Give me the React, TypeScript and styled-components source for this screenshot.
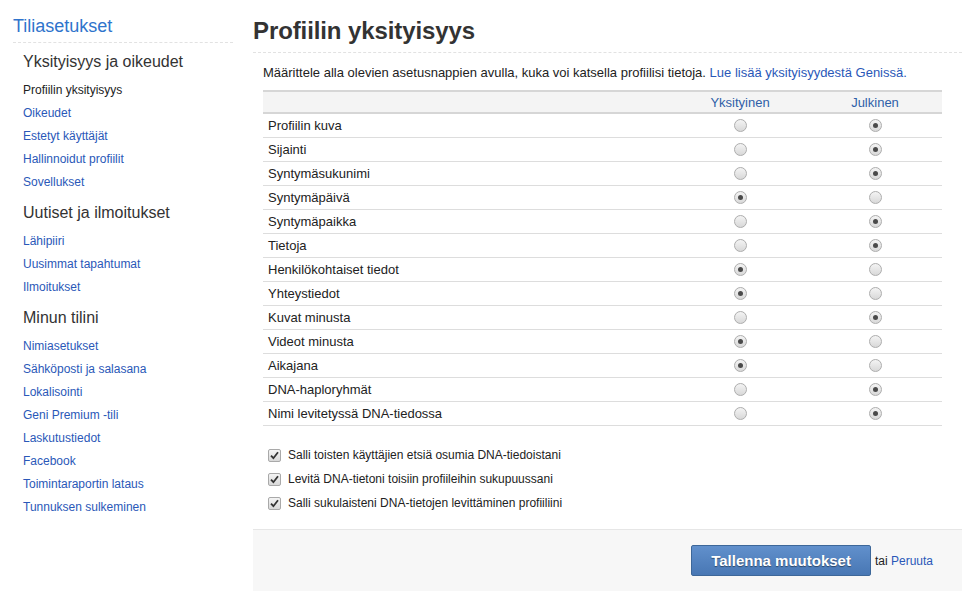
import React from "react";
import styled, { createGlobalStyle } from "styled-components";

const Global = createGlobalStyle`
  html, body { margin: 0; padding: 0; background: #fff; }
  body { font-family: "Liberation Sans", Arial, sans-serif; color: #222; }
  * { box-sizing: border-box; }
`;

const Page = styled.div`
  display: flex;
  width: 975px;
  min-height: 612px;
  align-items: flex-start;
`;

const Sidebar = styled.nav`
  width: 253px;
  flex: none;
  padding: 15px 20px 0 13px;
`;

const SideTitle = styled.div`
  font-size: 18px;
  line-height: 22px;
  color: #2f74cc;
  padding-bottom: 5px;
  border-bottom: 1px dashed #e2e2e2;
`;

const SideGroup = styled.div`
  padding-left: 10px;
`;

const SideHeading = styled.div`
  font-size: 16px;
  line-height: 20px;
  color: #333;
  margin: 9px 0 7px;
`;

const SideLink = styled.a<{ $active?: boolean }>`
  display: block;
  font-size: 12px;
  line-height: 23px;
  color: ${(p) => (p.$active ? "#222" : "#2a58b8")};
  text-decoration: none;
`;

const Main = styled.main`
  width: 709px;
  flex: none;
`;

const Title = styled.h1`
  margin: 0;
  padding-top: 17px;
  padding-bottom: 7px;
  font-size: 24px;
  line-height: 28px;
  font-weight: bold;
  color: #333;
  letter-spacing: -0.1px;
  border-bottom: 1px dashed #e2e2e2;
`;

const Content = styled.div`
  padding: 0 20px 0 10px;
`;

const Intro = styled.p`
  margin: 11px 0 8px;
  font-size: 13px;
  line-height: 18px;
  color: #222;
`;

const Link = styled.a`
  color: #2a58b8;
  text-decoration: none;
`;

const Table = styled.div`
  border-top: 2px solid #d6d6d6;
`;

const Row = styled.div<{ $head?: boolean }>`
  display: grid;
  grid-template-columns: 1fr 136px 134px;
  align-items: center;
  height: ${(p) => (p.$head ? "22px" : "24px")};
  border-bottom: ${(p) => (p.$head ? "2px solid #d6d6d6" : "1px solid #dddddd")};
  background: ${(p) => (p.$head ? "#f4f4f4" : "#fff")};
  font-size: 13px;
`;

const Label = styled.div`
  padding-left: 5px;
  color: #222;
`;

const HeadCell = styled.div`
  text-align: center;
  color: #2f5fa8;
`;

const Cell = styled.div`
  display: flex;
  justify-content: center;
`;

const Radio = styled.span<{ $on?: boolean }>`
  width: 13px;
  height: 13px;
  border-radius: 50%;
  border: 1px solid #adadad;
  background: linear-gradient(#f4f4f4, #d8d8d8);
  display: flex;
  align-items: center;
  justify-content: center;
  &::after {
    content: "";
    width: 5px;
    height: 5px;
    border-radius: 50%;
    background: ${(p) => (p.$on ? "#4a4a4a" : "transparent")};
  }
`;

const Checks = styled.div`
  margin-top: 17px;
  padding-left: 5px;
`;

const CheckRow = styled.label`
  display: flex;
  align-items: center;
  gap: 7px;
  height: 24px;
  font-size: 12px;
  color: #222;
`;

const Box = styled.span`
  width: 13px;
  height: 13px;
  border: 1px solid #a9a9a9;
  border-radius: 2px;
  background: linear-gradient(#f4f4f4, #d8d8d8);
  display: flex;
  align-items: center;
  justify-content: center;
`;

const Footer = styled.div`
  margin-top: 14px;
  height: 62px;
  background: #f7f7f7;
  border-top: 1px solid #e6e6e6;
  display: flex;
  align-items: center;
  justify-content: flex-end;
  padding: 0 29px 0 0;
  font-size: 12px;
  color: #222;
`;

const Button = styled.button`
  height: 31px;
  padding: 0 19px;
  margin-right: 4px;
  font-family: "Liberation Sans", Arial, sans-serif;
  font-size: 15px;
  font-weight: bold;
  color: #fff;
  text-shadow: 0 1px 1px rgba(0, 0, 0, 0.45);
  background: linear-gradient(#6190cc, #4877b4);
  border: 1px solid #3d6799;
  border-radius: 2px;
  cursor: pointer;
`;

const rows: [string, boolean][] = [
  ["Profiilin kuva", false],
  ["Sijainti", false],
  ["Syntymäsukunimi", false],
  ["Syntymäpäivä", true],
  ["Syntymäpaikka", false],
  ["Tietoja", false],
  ["Henkilökohtaiset tiedot", true],
  ["Yhteystiedot", true],
  ["Kuvat minusta", false],
  ["Videot minusta", true],
  ["Aikajana", true],
  ["DNA-haploryhmät", false],
  ["Nimi levitetyssä DNA-tiedossa", false],
];

const checks = [
  "Salli toisten käyttäjien etsiä osumia DNA-tiedoistani",
  "Levitä DNA-tietoni toisiin profiileihin sukupuussani",
  "Salli sukulaisteni DNA-tietojen levittäminen profiiliini",
];

const groups: { title: string; links: string[] }[] = [
  {
    title: "Yksityisyys ja oikeudet",
    links: ["Profiilin yksityisyys", "Oikeudet", "Estetyt käyttäjät", "Hallinnoidut profiilit", "Sovellukset"],
  },
  {
    title: "Uutiset ja ilmoitukset",
    links: ["Lähipiiri", "Uusimmat tapahtumat", "Ilmoitukset"],
  },
  {
    title: "Minun tilini",
    links: [
      "Nimiasetukset",
      "Sähköposti ja salasana",
      "Lokalisointi",
      "Geni Premium -tili",
      "Laskutustiedot",
      "Facebook",
      "Toimintaraportin lataus",
      "Tunnuksen sulkeminen",
    ],
  },
];

const Check = () => (
  <svg width="9" height="9" viewBox="0 0 9 9">
    <path d="M1 4.6 L3.4 7.2 L8 1.2" fill="none" stroke="#333" strokeWidth="1.8" />
  </svg>
);

export default function App() {
  return (
    <>
      <Global />
      <Page>
        <Sidebar>
          <SideTitle>Tiliasetukset</SideTitle>
          {groups.map((g) => (
            <SideGroup key={g.title}>
              <SideHeading>{g.title}</SideHeading>
              {g.links.map((l) => (
                <SideLink key={l} $active={l === "Profiilin yksityisyys"}>
                  {l}
                </SideLink>
              ))}
            </SideGroup>
          ))}
        </Sidebar>
        <Main>
          <Title>Profiilin yksityisyys</Title>
          <Content>
            <Intro>
              Määrittele alla olevien asetusnappien avulla, kuka voi katsella profiilisi tietoja.{" "}
              <Link>Lue lisää yksityisyydestä Genissä.</Link>
            </Intro>
            <Table>
              <Row $head>
                <Label />
                <HeadCell>Yksityinen</HeadCell>
                <HeadCell>Julkinen</HeadCell>
              </Row>
              {rows.map(([name, priv]) => (
                <Row key={name}>
                  <Label>{name}</Label>
                  <Cell>
                    <Radio $on={priv} />
                  </Cell>
                  <Cell>
                    <Radio $on={!priv} />
                  </Cell>
                </Row>
              ))}
            </Table>
            <Checks>
              {checks.map((c) => (
                <CheckRow key={c}>
                  <Box>
                    <Check />
                  </Box>
                  {c}
                </CheckRow>
              ))}
            </Checks>
          </Content>
          <Footer>
            <Button>Tallenna muutokset</Button>
            tai&nbsp;<Link>Peruuta</Link>
          </Footer>
        </Main>
      </Page>
    </>
  );
}
